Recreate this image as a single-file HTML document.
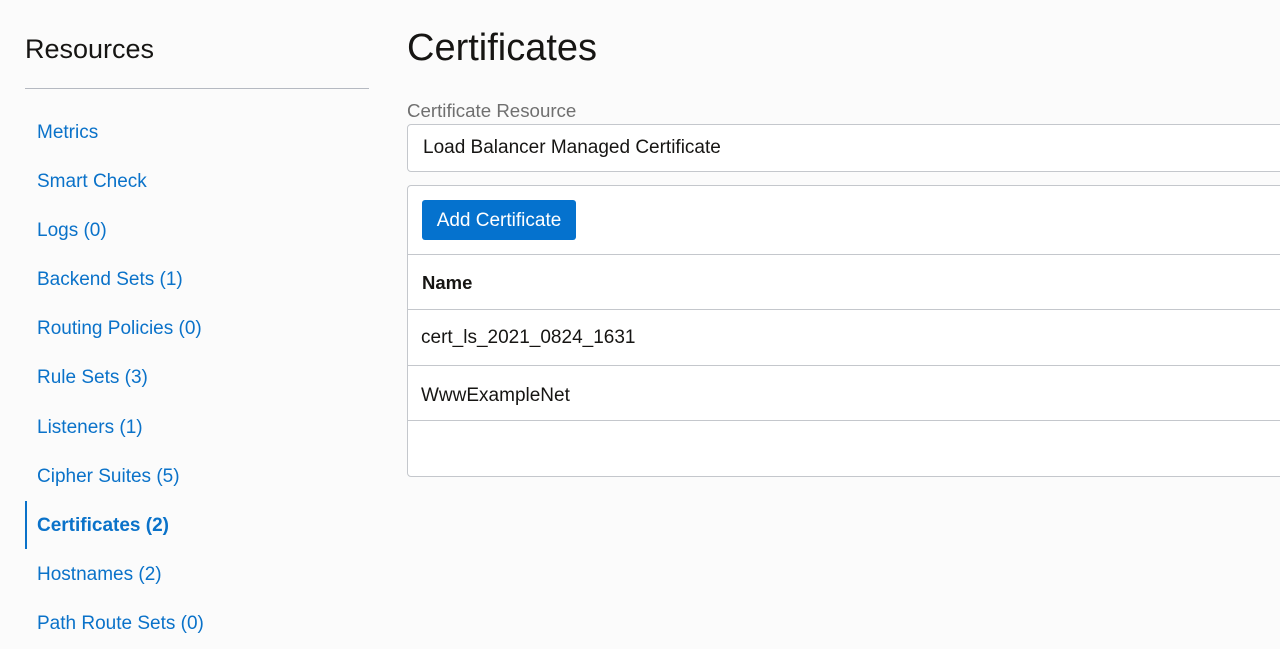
<!DOCTYPE html>
<html><head><style>
body{margin:0;width:1280px;height:649px;overflow:hidden;background:#fbfbfb;font-family:"Liberation Sans",sans-serif;position:relative}
.a{position:absolute;white-space:nowrap}
.nav{position:absolute;left:37px;font-size:19px;color:#0a72c9;line-height:22px}
.box{position:absolute;left:407px;width:900px;border:1px solid #c4c7cc;border-radius:4px;background:#fff}
.ln{position:absolute;left:408px;width:880px;height:1px;background:#c4c7cc}
</style></head><body>
<div class="a" style="left:25px;top:34px;font-size:27px;color:#161513">Resources</div>
<div class="a" style="left:25px;top:88px;width:344px;height:1px;background:#b5b9c1"></div>
<div class="nav" style="top:122px">Metrics</div>
<div class="nav" style="top:171px">Smart Check</div>
<div class="nav" style="top:220px">Logs (0)</div>
<div class="nav" style="top:269px">Backend Sets (1)</div>
<div class="nav" style="top:318px">Routing Policies (0)</div>
<div class="nav" style="top:367px">Rule Sets (3)</div>
<div class="nav" style="top:417px">Listeners (1)</div>
<div class="nav" style="top:466px">Cipher Suites (5)</div>
<div class="a" style="left:25px;top:501px;width:2px;height:48px;background:#0a72c9"></div>
<div class="nav" style="top:515px;font-weight:bold">Certificates (2)</div>
<div class="nav" style="top:564px">Hostnames (2)</div>
<div class="nav" style="top:613px">Path Route Sets (0)</div>

<div class="a" style="left:407px;top:27px;font-size:38px;color:#161513">Certificates</div>
<div class="a" style="left:407px;top:100px;font-size:18.7px;color:#6f6f6f">Certificate Resource</div>
<div class="box" style="top:124px;height:46px"></div>
<div class="a" style="left:423px;top:137px;font-size:19px;color:#161513">Load Balancer Managed Certificate</div>
<div class="box" style="top:185px;height:290px"></div>
<div class="a" style="left:422px;top:200px;width:154px;height:40px;background:#0572ce;border-radius:3px;color:#fff;font-size:19px;line-height:41px;text-align:center">Add Certificate</div>
<div class="ln" style="top:254px"></div>
<div class="a" style="left:422px;top:272px;font-size:18.5px;font-weight:bold;color:#161513">Name</div>
<div class="ln" style="top:309px"></div>
<div class="a" style="left:421px;top:327px;font-size:19px;color:#161513">cert_ls_2021_0824_1631</div>
<div class="ln" style="top:365px"></div>
<div class="a" style="left:421px;top:385px;font-size:19px;color:#161513">WwwExampleNet</div>
<div class="ln" style="top:420px"></div>
</body></html>
